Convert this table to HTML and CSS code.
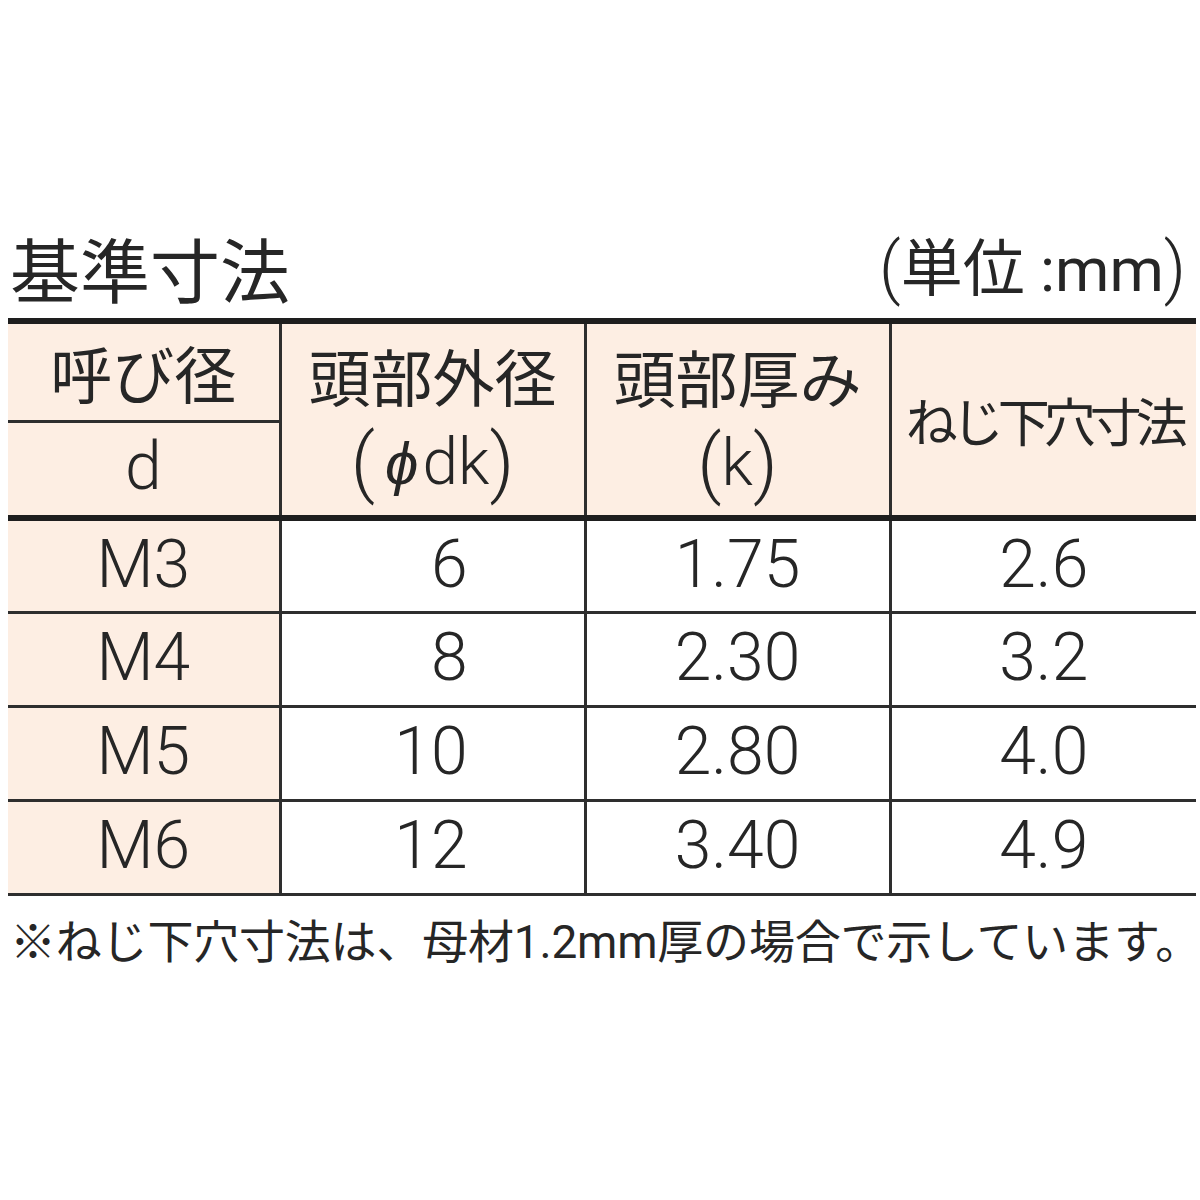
FILE: index.html
```html
<!DOCTYPE html>
<html lang="ja">
<head>
<meta charset="utf-8">
<title>基準寸法</title>
<link rel="stylesheet" href="styles.css">
</head>
<body>
<div class="page">
  <div class="title-row">
    <h1 class="title">基準寸法</h1>
    <div class="unit"><span class="pn">(</span>単位 :mm<span class="pn">)</span></div>
  </div>
  <table class="spec">
    <colgroup>
      <col class="c1"><col class="c2"><col class="c3"><col class="c4">
    </colgroup>
    <thead>
      <tr class="h1">
        <th class="hd split">呼び径</th>
        <th class="hd two" rowspan="2"><span class="ln">頭部外径</span><span class="ln sub"><span class="pn open">(</span><span class="phi">ϕ</span>dk<span class="pn">)</span></span></th>
        <th class="hd two" rowspan="2"><span class="ln">頭部厚み</span><span class="ln sub"><span class="pn">(</span>k<span class="pn">)</span></span></th>
        <th class="hd narrow" rowspan="2">ねじ下穴寸法</th>
      </tr>
      <tr class="h2">
        <th class="hd sym">d</th>
      </tr>
    </thead>
    <tbody>
      <tr><th class="key">M3</th><td class="r">6</td><td>1.75</td><td>2.6</td></tr>
      <tr><th class="key">M4</th><td class="r">8</td><td>2.30</td><td>3.2</td></tr>
      <tr><th class="key">M5</th><td class="r">10</td><td>2.80</td><td>4.0</td></tr>
      <tr><th class="key">M6</th><td class="r">12</td><td>3.40</td><td>4.9</td></tr>
    </tbody>
  </table>
  <p class="note">※ねじ下穴寸法は、母材1.2mm厚の場合で示しています。</p>
</div>
</body>
</html>
```

FILE: styles.css
```css
html, body {
  margin: 0;
  padding: 0;
  background: #ffffff;
}
body {
  font-family: Roboto, "Noto Sans CJK JP", sans-serif;
  font-weight: 300;
  color: #262626;
}
.page {
  padding: 228px 4px 0 8px;
}
.title-row {
  display: flex;
  justify-content: space-between;
  align-items: flex-end;
  padding: 0 10px 6px 2px;
  height: 84px;
  box-sizing: border-box;
}
.title {
  margin: 0;
  font-family: "Noto Sans CJK JP", sans-serif;
  font-weight: 400;
  font-size: 70px;
  line-height: 76px;
}
.unit {
  font-family: Roboto, "Noto Sans CJK JP", sans-serif;
  font-weight: 400;
  font-size: 62px;
  line-height: 72px;
}
.unit .pn {
  font-weight: 300;
  font-size: 68px;
}
.spec {
  width: 1188px;
  border-collapse: collapse;
  table-layout: fixed;
  margin-top: 6px;
}
.c1 { width: 272px; }
.c2 { width: 305px; }
.c3 { width: 305px; }
.c4 { width: 306px; }
.spec th, .spec td {
  padding: 0;
  font-weight: 300;
  text-align: center;
  vertical-align: middle;
  border-left: 3px solid #2e2e2e;
  border-top: 3px solid #2e2e2e;
  border-bottom: 3px solid #2e2e2e;
}
.spec tr > :first-child {
  border-left: none;
}
.spec thead tr.h1 th {
  border-top: 6px solid #1e1e1e;
}
.spec thead th[rowspan], .spec thead tr.h2 th {
  border-bottom: 6px solid #1e1e1e;
}
.hd {
  background: #fdeee3;
  font-family: "Noto Sans CJK JP", sans-serif;
  font-size: 62px;
}
.spec .hd {
  font-weight: 400;
}
.h1 { height: 100px; }
.h2 { height: 97px; }
.split {
  line-height: 70px;
}
.spec .sym {
  font-family: Roboto, sans-serif;
  font-weight: 300;
  font-size: 66px;
  padding-bottom: 4px;
}
.two .ln {
  display: block;
  line-height: 88px;
}
.two .sub {
  font-family: Roboto, sans-serif;
  font-weight: 300;
  font-size: 64px;
}
.sub .pn {
  font-size: 76px;
  line-height: 1;
  display: inline-block;
  vertical-align: -4px;
}
.sub .pn.open {
  margin-right: 10px;
}
.sub .phi {
  font-family: "Liberation Sans", "DejaVu Sans", sans-serif;
  font-style: italic;
  font-weight: 400;
  font-size: 60px;
  margin-right: 4px;
}
.narrow {
  font-size: 52px;
  letter-spacing: -6px;
  padding-bottom: 8px;
}
.spec tbody tr {
  height: 94px;
}
.key {
  background: #fdeee3;
}
.spec tbody th, .spec tbody td {
  font-size: 66px;
  line-height: 1;
  padding-bottom: 2px;
}
.spec td.r {
  text-align: right;
  padding-right: 116px;
}
.note {
  margin: 16px 0 0 2px;
  font-family: Roboto, "Noto Sans CJK JP", sans-serif;
  font-weight: 400;
  font-size: 46px;
  line-height: 60px;
  letter-spacing: -0.2px;
  white-space: nowrap;
}
```
